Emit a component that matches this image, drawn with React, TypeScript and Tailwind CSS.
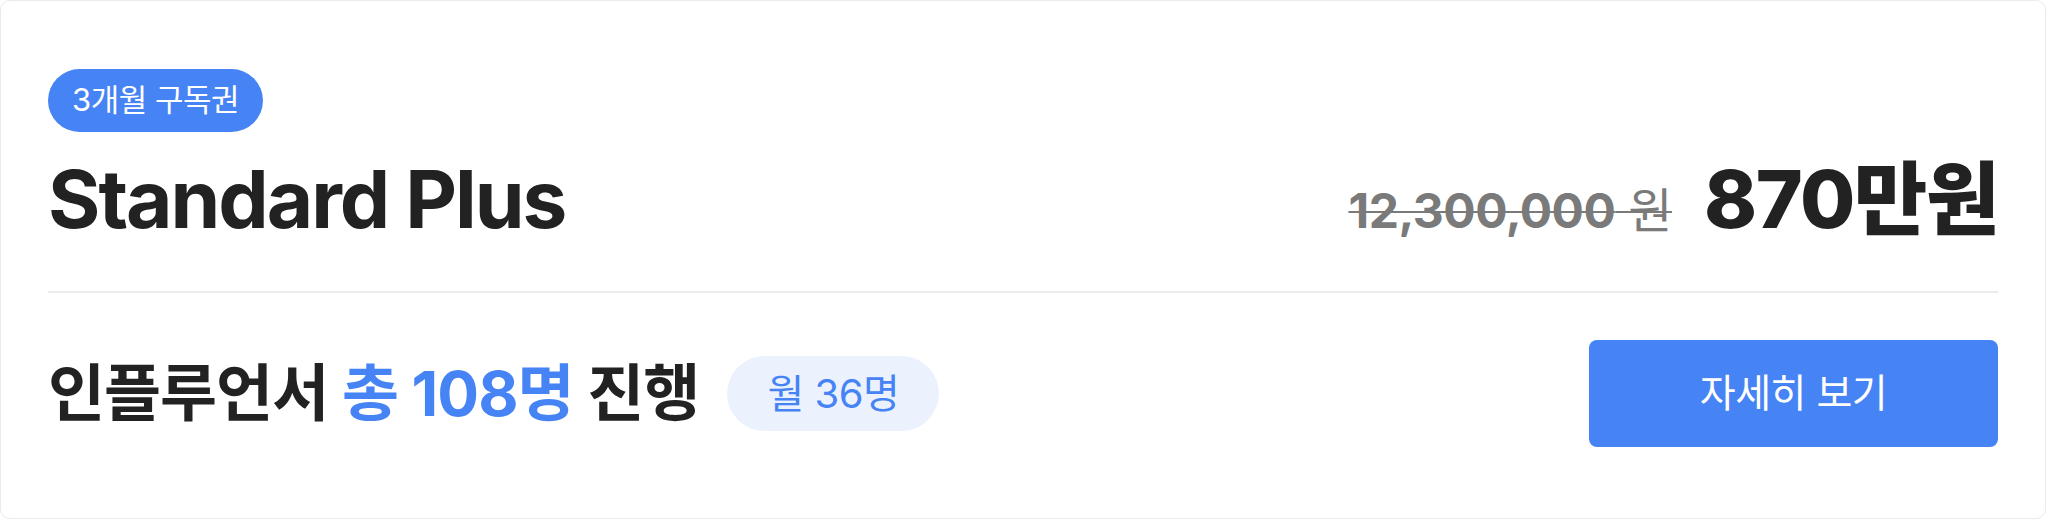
import React from "react";

const font = { fontFamily: '"Inter", "Noto Sans CJK KR", sans-serif' };

export default function App() {
  return (
    <div className="w-[2048px] h-[520px] bg-white" style={font}>
      <div className="w-[2046px] h-[519px] border border-[#ebebeb] rounded-[10px] bg-white px-[47px] pt-[68px] flex flex-col">
        <div className="flex">
          <div className="h-[63px] px-[24px] rounded-full bg-[#4683f5] text-white text-[31px] flex items-center tracking-[-0.5px]">
            3개월 구독권
          </div>
        </div>
        <div className="flex items-baseline justify-between mt-[27px]">
          <div className="text-[80px] leading-[80px] font-bold text-[#222222] tracking-[-2px]">Standard Plus</div>
          <div className="flex items-baseline">
            <span className="text-[48px] leading-[48px] text-[#7a7a7a] line-through decoration-[2px] decoration-[#7a7a7a] tracking-[-0.5px]">
              <span className="font-bold">12,300,000</span>
              <span className="font-normal"> 원</span>
            </span>
            <span className="ml-[32px] text-[80px] leading-[80px] font-extrabold text-[#222222] tracking-[-1.5px]">870만원</span>
          </div>
        </div>
        <div className="h-[2px] bg-[#ebebeb] mt-[52px]" />
        <div className="flex items-center justify-between mt-[47px]">
          <div className="flex items-center">
            <div className="text-[62px] leading-[70px] font-bold text-[#222222] tracking-[-1px]">
              인플루언서 <span className="text-[#4683f5]">총 108명</span> 진행
            </div>
            <div className="ml-[28px] h-[75px] w-[212px] rounded-full bg-[#ebf2fe] text-[#4683f5] text-[40px] flex items-center justify-center tracking-[-0.5px]">
              월 36명
            </div>
          </div>
          <button className="w-[409px] h-[107px] rounded-[8px] bg-[#4683f5] text-white text-[39px] flex items-center justify-center tracking-[-0.5px]">
            자세히 보기
          </button>
        </div>
      </div>
    </div>
  );
}
